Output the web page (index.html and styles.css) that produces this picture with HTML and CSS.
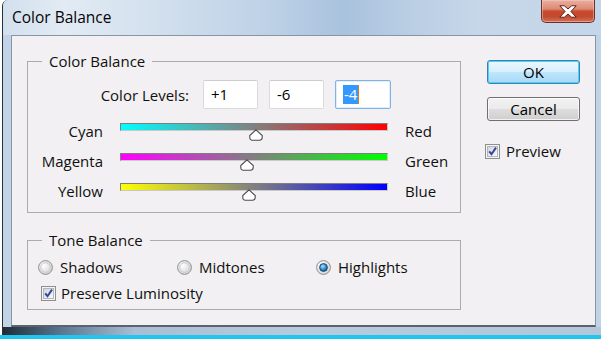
FILE: index.html
```html
<!DOCTYPE html>
<html lang="en">
<head>
<meta charset="utf-8">
<title>Color Balance</title>
<link rel="stylesheet" href="styles.css">
</head>
<body>
<svg class="defs" width="0" height="0" aria-hidden="true">
  <defs>
    <radialGradient id="radioFill" cx="0.35" cy="0.35" r="0.75">
      <stop offset="0" stop-color="#ffffff"/>
      <stop offset="1" stop-color="#d2d2d2"/>
    </radialGradient>
    <radialGradient id="dotFill" cx="0.4" cy="0.35" r="0.7">
      <stop offset="0" stop-color="#a9e2ff"/>
      <stop offset="0.5" stop-color="#3a9ad8"/>
      <stop offset="1" stop-color="#0c4f86"/>
    </radialGradient>
    <linearGradient id="boxFill" x1="0" y1="0" x2="1" y2="1">
      <stop offset="0" stop-color="#cfd3d8"/>
      <stop offset="1" stop-color="#fbfbfb"/>
    </linearGradient>
  </defs>
</svg>
<div class="window">
  <div class="glass">
    <div class="titlebar">
      <span class="title">Color Balance</span>
      <button class="close" aria-label="Close">
        <svg width="18" height="13" viewBox="0 0 18 13"><polygon points="0.8,0.8 5.4,0.8 9,4 12.6,0.8 17.2,0.8 11.9,6.5 17.2,12.2 12.6,12.2 9,9 5.4,12.2 0.8,12.2 6.1,6.5" fill="#ffffff" stroke="#5b2318" stroke-width="1"/></svg>
      </button>
    </div>
    <div class="client">
      <div class="main">
        <fieldset class="group group-color">
          <legend>Color Balance</legend>
          <div class="levels">
            <span class="levels-label">Color Levels:</span>
            <span class="field">+1</span>
            <span class="field">-6</span>
            <span class="field field-focus"><span class="sel">-4</span><span class="caret"></span></span>
          </div>
          <div class="sliders">
            <span class="lbl-left">Cyan</span>
            <div class="track"><div class="bar bar-cr"></div><svg class="thumb" style="left:50.7%" viewBox="0 0 14 12"><path d="M7 0.8 L13.2 6.6 V8.6 Q13.2 11.2 10.6 11.2 H3.4 Q0.8 11.2 0.8 8.6 V6.6 Z" fill="#ffffff" stroke="#4d4d4d" stroke-width="1.1"/></svg></div>
            <span class="lbl-right">Red</span>

            <span class="lbl-left">Magenta</span>
            <div class="track"><div class="bar bar-mg"></div><svg class="thumb" style="left:47.4%" viewBox="0 0 14 12"><path d="M7 0.8 L13.2 6.6 V8.6 Q13.2 11.2 10.6 11.2 H3.4 Q0.8 11.2 0.8 8.6 V6.6 Z" fill="#ffffff" stroke="#4d4d4d" stroke-width="1.1"/></svg></div>
            <span class="lbl-right">Green</span>

            <span class="lbl-left">Yellow</span>
            <div class="track"><div class="bar bar-yb"></div><svg class="thumb" style="left:48.1%" viewBox="0 0 14 12"><path d="M7 0.8 L13.2 6.6 V8.6 Q13.2 11.2 10.6 11.2 H3.4 Q0.8 11.2 0.8 8.6 V6.6 Z" fill="#ffffff" stroke="#4d4d4d" stroke-width="1.1"/></svg></div>
            <span class="lbl-right">Blue</span>
          </div>
        </fieldset>

        <fieldset class="group group-tone">
          <legend>Tone Balance</legend>
          <div class="radios">
            <label class="radio-item">
              <svg class="radio" viewBox="0 0 15 15"><circle cx="7.5" cy="7.5" r="6.9" fill="url(#radioFill)" stroke="#8e8f8f"/><circle cx="7.5" cy="7.5" r="4.8" fill="none" stroke="#c9c9c9"/></svg>
              Shadows
            </label>
            <label class="radio-item">
              <svg class="radio" viewBox="0 0 15 15"><circle cx="7.5" cy="7.5" r="6.9" fill="url(#radioFill)" stroke="#8e8f8f"/><circle cx="7.5" cy="7.5" r="4.8" fill="none" stroke="#c9c9c9"/></svg>
              Midtones
            </label>
            <label class="radio-item">
              <svg class="radio" viewBox="0 0 15 15"><circle cx="7.5" cy="7.5" r="6.9" fill="url(#radioFill)" stroke="#8e8f8f"/><circle cx="7.5" cy="7.5" r="3.9" fill="url(#dotFill)" stroke="#1c3f66" stroke-width="0.9"/></svg>
              Highlights
            </label>
          </div>
          <label class="check-item check-lum">
            <svg class="check" viewBox="0 0 15 15"><rect x="0.5" y="0.5" width="14" height="14" fill="#f4f4f4" stroke="#8e8f8f"/><rect x="2.5" y="2.5" width="10" height="10" fill="url(#boxFill)" stroke="#b3b7bd"/><path d="M4.2 7.4 L6.5 10.2 L11 3.6" fill="none" stroke="#33469a" stroke-width="2"/></svg>
            Preserve Luminosity
          </label>
        </fieldset>
      </div>

      <div class="side">
        <button class="btn btn-default">OK</button>
        <button class="btn btn-cancel">Cancel</button>
        <label class="check-item check-preview">
          <svg class="check" viewBox="0 0 15 15"><rect x="0.5" y="0.5" width="14" height="14" fill="#f4f4f4" stroke="#8e8f8f"/><rect x="2.5" y="2.5" width="10" height="10" fill="url(#boxFill)" stroke="#b3b7bd"/><path d="M4.2 7.4 L6.5 10.2 L11 3.6" fill="none" stroke="#33469a" stroke-width="2"/></svg>
          Preview
        </label>
      </div>
    </div>
    <div class="bottom-frame"></div>
  </div>
  <div class="strip"></div>
</div>
</body>
</html>
```

FILE: styles.css
```css
* { box-sizing: border-box; }

html, body {
  margin: 0;
  padding: 0;
}

body {
  width: 601px;
  height: 339px;
  overflow: hidden;
  background: #ffffff;
  font-family: "Open Sans", "Noto Sans", "DejaVu Sans", sans-serif;
  font-size: 15px;
  color: #101010;
}

.defs {
  position: absolute;
  width: 0;
  height: 0;
}

.window {
  width: 601px;
  height: 339px;
  display: flex;
  flex-direction: column;
  background: #ffffff;
}

.glass {
  flex: 1;
  display: flex;
  flex-direction: column;
  margin-left: 2px;
  border-left: 1px solid #27313c;
  border-top-left-radius: 6px;
  background: #c1d3e6;
  overflow: hidden;
}

.titlebar {
  flex: none;
  height: 35px;
  display: flex;
  align-items: flex-start;
  padding-left: 9px;
  background: linear-gradient(90deg, #d2dfed 0%, #e2ebf4 10%, #d3e0ee 25%, #bdd1e6 45%, #a8c2de 57%, #b7cce3 66%, #c7d7e9 80%, #c4d6ea 100%);
}

.title {
  font-size: 15.5px;
  line-height: 20px;
  padding-top: 7px;
  color: #050505;
}

.close {
  margin-left: auto;
  margin-right: 6px;
  width: 54px;
  height: 23px;
  padding: 0;
  display: flex;
  align-items: center;
  justify-content: center;
  border: 1px solid #6a3328;
  border-top: none;
  border-radius: 0 0 5px 5px;
  background: linear-gradient(180deg, #e9b1a2 0%, #dc8a74 40%, #c9492d 52%, #c24a2e 75%, #d4725a 100%);
  box-shadow: inset 0 0 0 1px rgba(255, 210, 200, 0.45);
}

.close svg { display: block; }

.client {
  flex: none;
  height: 292px;
  margin: 0 5px 0 8px;
  border: 1px solid #8895a3;
  border-bottom: 2px solid #59636e;
  background: #f2f0f2;
  display: flex;
  padding: 16px 0 0 15px;
}

.main {
  width: 434px;
  display: flex;
  flex-direction: column;
}

.group {
  margin: 0;
  padding: 0;
  border: 1px solid #ababab;
  min-inline-size: 0;
}

.group legend {
  margin-left: 14px;
  padding: 0 7px;
  font-size: 15px;
  line-height: 19px;
}

.group-color {
  height: 161px;
}

.group-tone {
  height: 79px;
  margin-top: 18px;
}

/* Color levels row */
.levels {
  margin-top: 9px;
  height: 29px;
  display: flex;
  align-items: center;
}

.levels-label {
  width: 161px;
  margin-right: 14px;
  text-align: right;
  line-height: 18px;
}

.field {
  width: 55px;
  height: 29px;
  margin-right: 11px;
  padding-left: 7px;
  border: 1px solid #dadada;
  border-top-color: #cdcdcd;
  border-radius: 2px;
  background: #ffffff;
  font-size: 15px;
  line-height: 27px;
  color: #000;
  display: flex;
  align-items: center;
}

.field-focus {
  width: 56px;
  padding-left: 7px;
  border-color: #7fb2e5;
  box-shadow: inset 0 0 0 1px #e2eefb;
}

.sel {
  display: inline-block;
  height: 19px;
  line-height: 19px;
  padding: 0 1px;
  background: #3399ff;
  color: #ffffff;
}

.caret {
  display: inline-block;
  width: 1px;
  height: 19px;
  background: #e07a20;
}

/* Sliders */
.sliders {
  margin-top: 14px;
  display: grid;
  grid-template-columns: 75px 268px auto;
  column-gap: 17px;
  grid-auto-rows: 30px;
}

.lbl-left,
.lbl-right {
  line-height: 18px;
  margin-top: -1px;
}

.lbl-left { text-align: right; }

.track {
  position: relative;
  height: 8px;
}

.bar {
  height: 8px;
  border: 1px solid;
  border-color: #7e7e7e #c9c9c9 #c9c9c9 #7e7e7e;
}

.bar-cr { background: linear-gradient(90deg, #00ffff 0%, #808080 50%, #ff0000 100%); }
.bar-mg { background: linear-gradient(90deg, #ff00ff 0%, #808080 50%, #00ff00 100%); }
.bar-yb { background: linear-gradient(90deg, #ffff00 0%, #808080 50%, #0000ff 100%); }

.thumb {
  position: absolute;
  top: 6px;
  width: 14px;
  height: 12px;
  margin-left: -7px;
}

/* Tone balance */
.radios {
  margin-top: 8px;
  padding-left: 10px;
  display: flex;
  height: 18px;
}

.radio-item {
  width: 139px;
  display: flex;
  align-items: center;
  gap: 7px;
  line-height: 18px;
}

.radio {
  width: 15px;
  height: 15px;
  flex: none;
}

.check-item {
  display: flex;
  align-items: center;
  gap: 5px;
  line-height: 18px;
  height: 18px;
}

.check {
  width: 15px;
  height: 15px;
  flex: none;
}

.check-lum {
  margin-top: 8px;
  padding-left: 13px;
}

/* Side buttons */
.side {
  margin-left: 26px;
  padding-top: 8px;
  width: 93px;
  display: flex;
  flex-direction: column;
}

.btn {
  width: 93px;
  height: 24px;
  padding: 0;
  font-family: inherit;
  font-size: 15px;
  line-height: 22px;
  color: #000;
  border: 1px solid #707070;
  border-radius: 3px;
  background: linear-gradient(180deg, #f2f2f2 0%, #ebebeb 48%, #dddddd 52%, #cfcfcf 100%);
  box-shadow: inset 0 0 0 1px rgba(255, 255, 255, 0.7);
}

.btn-default {
  border-color: #3c7fb1;
  background: linear-gradient(180deg, #eaf6fd 0%, #d9f0fc 48%, #bee6fd 52%, #a7d9f5 100%);
  box-shadow: inset 0 0 0 1px #4fd0f7;
}

.btn-cancel { margin-top: 13px; }

.check-preview {
  margin-top: 21px;
  margin-left: -2px;
  gap: 6px;
}

/* Window bottom */
.bottom-frame {
  flex: 1;
  background: linear-gradient(90deg, #1f2c38 0%, #5d7893 10%, #a9bed4 22%, #b9cadc 50%, #b4c6da 100%);
}

.strip {
  flex: none;
  height: 4px;
  background: #1fc6ee;
}
```
